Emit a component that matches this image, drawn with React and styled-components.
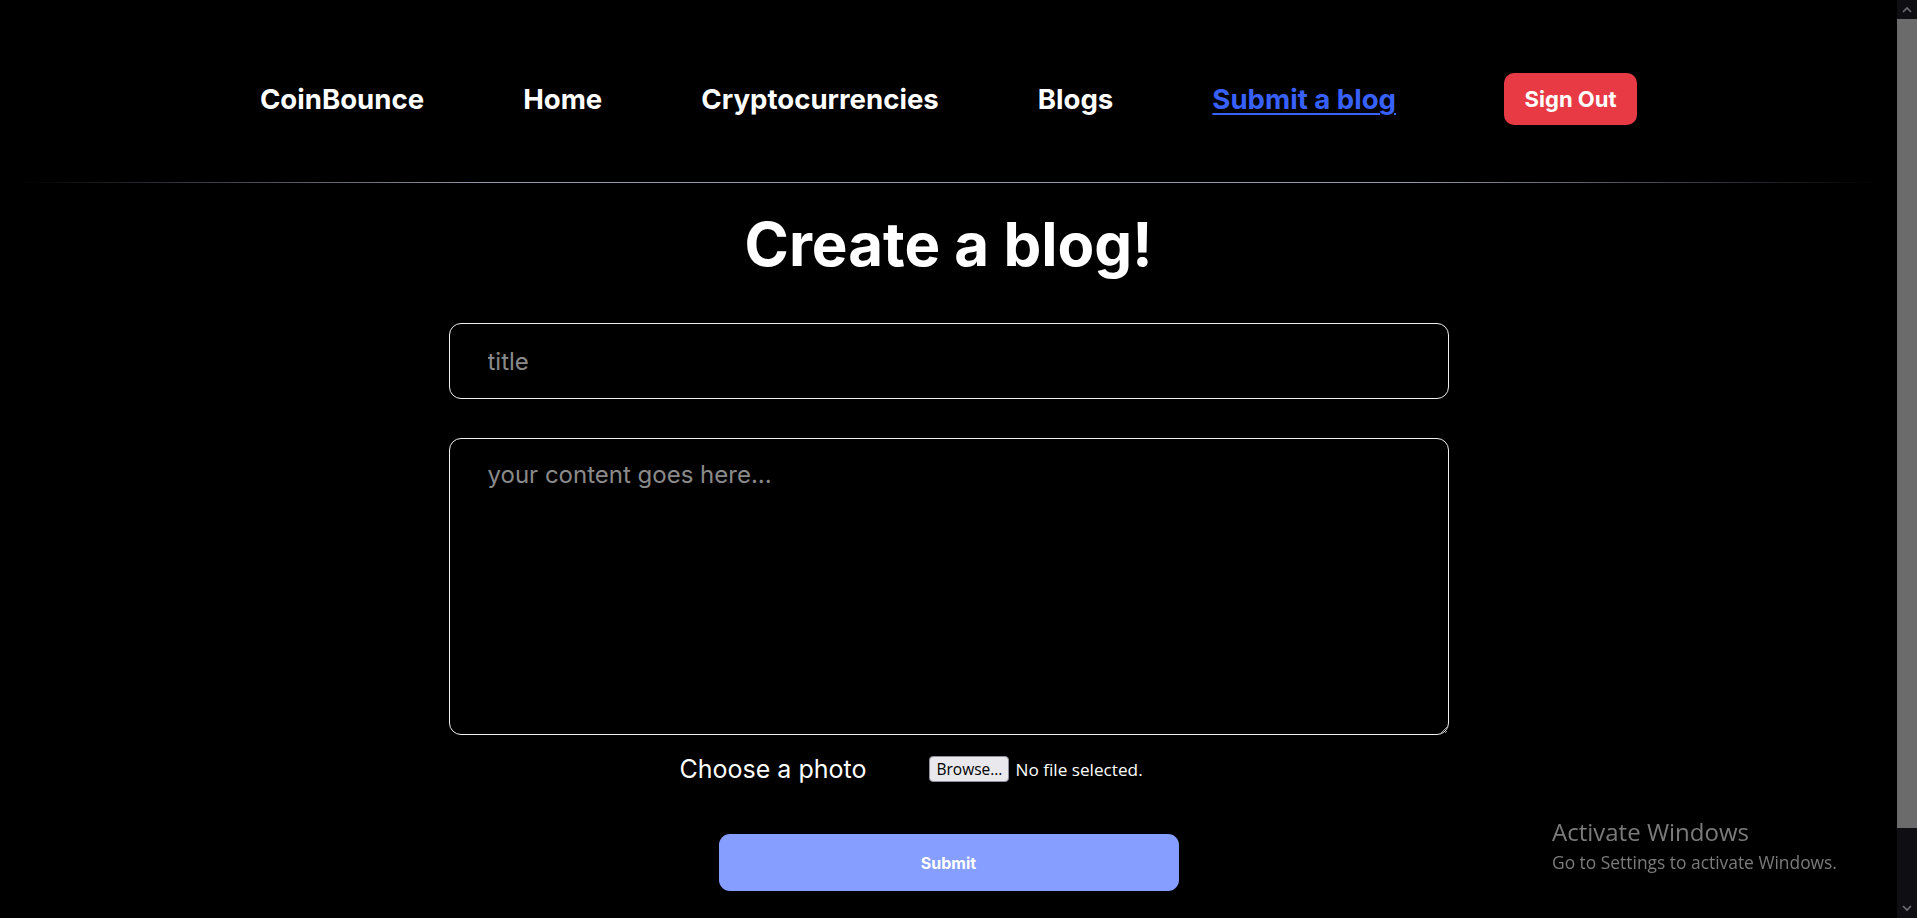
import React from "react";
import styled, { createGlobalStyle } from "styled-components";

const GlobalStyle = createGlobalStyle`
  html, body {
    margin: 0;
    padding: 0;
    background: #000;
    height: 100%;
    overflow: hidden;
  }
  #root { height: 100%; }
  * { box-sizing: border-box; }
`;

const Shell = styled.div`
  display: flex;
  height: 100vh;
  background: #000;
  font-family: Inter, "Liberation Sans", sans-serif;
  color: #fff;
`;

const Page = styled.div`
  flex: 1;
  display: flex;
  flex-direction: column;
  align-items: center;
  min-width: 0;
`;

const Nav = styled.nav`
  width: 100%;
  display: flex;
  align-items: center;
  justify-content: center;
  gap: 99px;
  padding: 73px 0 57px;
`;

const NavLink = styled.a`
  font-size: 27.6px;
  font-weight: 700;
  color: ${(p) => (p.$active ? "#3861fb" : "#fff")};
  text-decoration: ${(p) => (p.$active ? "underline" : "none")};
  text-decoration-thickness: 2px;
  text-underline-offset: 4px;
  line-height: 34px;
  cursor: pointer;
`;

const SignOut = styled.button`
  margin-left: 9px;
  width: 133px;
  height: 52px;
  border: none;
  border-radius: 10px;
  background: #e83a44;
  color: #fff;
  font-family: Inter, "Liberation Sans", sans-serif;
  font-size: 22px;
  font-weight: 700;
  cursor: pointer;
`;

const Separator = styled.div`
  width: calc(100% - 40px);
  height: 1px;
  background: linear-gradient(
    to right,
    rgba(149, 152, 173, 0) 0%,
    #9598ad 25%,
    #9598ad 75%,
    rgba(149, 152, 173, 0) 100%
  );
`;

const Heading = styled.h1`
  margin: 31px 0 0;
  font-size: 60px;
  line-height: 60px;
  font-weight: 700;
`;

const Form = styled.form`
  margin-top: 49px;
  width: 1000px;
  display: flex;
  flex-direction: column;
  align-items: center;
`;

const fieldBase = `
  width: 1000px;
  background: #000;
  color: #fff;
  border: 1px solid #f0f0f0;
  border-radius: 12px;
  font-family: Inter, "Liberation Sans", sans-serif;
  font-size: 24px;
  outline: none;
  &::placeholder { color: #8a8a8a; }
`;

const TitleInput = styled.input`
  ${fieldBase}
  height: 76px;
  padding: 0 38px;
`;

const ContentArea = styled.textarea`
  ${fieldBase}
  margin-top: 39px;
  height: 297px;
  padding: 21px 38px;
  resize: vertical;
`;

const PhotoRow = styled.div`
  margin-top: 20px;
  display: flex;
  align-items: center;
  gap: 63px;
  height: 28px;
`;

const PhotoLabel = styled.span`
  font-size: 25px;
  color: #fff;
`;

const FileControl = styled.label`
  width: 288px;
  display: flex;
  align-items: center;
  gap: 6px;
  font-family: "Open Sans", "Noto Sans", sans-serif;
  font-size: 17.2px;
  color: #fff;
  cursor: pointer;
`;

const HiddenFile = styled.input`
  display: none;
`;

const BrowseButton = styled.span`
  display: inline-flex;
  align-items: center;
  justify-content: center;
  width: 80px;
  height: 26px;
  font-size: 15.5px;
  background: #e9e9ed;
  color: #000;
  border: 1px solid #8f8f9d;
  border-radius: 4px;
`;

const SubmitButton = styled.button`
  margin-top: 51px;
  width: 460px;
  height: 57px;
  border: none;
  border-radius: 11px;
  background: #869eff;
  color: #fff;
  font-family: Inter, "Liberation Sans", sans-serif;
  font-size: 16px;
  font-weight: 700;
  cursor: pointer;
`;

const Scrollbar = styled.div`
  width: 20px;
  height: 100%;
  background: #0e0e13;
  display: flex;
  flex-direction: column;
  align-items: center;
`;

const ScrollArrow = styled.div`
  height: 19px;
  width: 100%;
  display: flex;
  align-items: center;
  justify-content: center;
  color: #6e6e74;
`;

const Thumb = styled.div`
  width: 100%;
  height: 809px;
  background: #6b6b6b;
`;

const Spacer = styled.div`
  flex: 1;
`;

const Watermark = styled.div`
  position: fixed;
  left: 1552px;
  top: 813px;
  font-family: "Open Sans", "Noto Sans", sans-serif;
  color: #7b7b7b;
  pointer-events: none;
`;

const WatermarkTitle = styled.div`
  font-size: 24px;
  line-height: 37px;
`;

const WatermarkSub = styled.div`
  font-size: 17.4px;
  line-height: 24px;
`;

const Chevron = ({ up }) => (
  <svg width="10" height="7" viewBox="0 0 10 7">
    <path
      d={up ? "M1 6 L5 2 L9 6" : "M1 1 L5 5 L9 1"}
      fill="none"
      stroke="currentColor"
      strokeWidth="1.6"
    />
  </svg>
);

export default function App() {
  return (
    <>
      <GlobalStyle />
      <Shell>
        <Page>
          <Nav>
            <NavLink>CoinBounce</NavLink>
            <NavLink>Home</NavLink>
            <NavLink>Cryptocurrencies</NavLink>
            <NavLink>Blogs</NavLink>
            <NavLink $active>Submit a blog</NavLink>
            <SignOut>Sign Out</SignOut>
          </Nav>
          <Separator />
          <Heading>Create a blog!</Heading>
          <Form onSubmit={(e) => e.preventDefault()}>
            <TitleInput type="text" placeholder="title" />
            <ContentArea placeholder="your content goes here..." />
            <PhotoRow>
              <PhotoLabel>Choose a photo</PhotoLabel>
              <FileControl>
                <HiddenFile type="file" accept="image/*" />
                <BrowseButton>Browse...</BrowseButton>
                <span>No file selected.</span>
              </FileControl>
            </PhotoRow>
            <SubmitButton type="submit">Submit</SubmitButton>
          </Form>
        </Page>
        <Scrollbar>
          <ScrollArrow>
            <Chevron up />
          </ScrollArrow>
          <Thumb />
          <Spacer />
          <ScrollArrow>
            <Chevron />
          </ScrollArrow>
        </Scrollbar>
      </Shell>
      <Watermark>
        <WatermarkTitle>Activate Windows</WatermarkTitle>
        <WatermarkSub>Go to Settings to activate Windows.</WatermarkSub>
      </Watermark>
    </>
  );
}
